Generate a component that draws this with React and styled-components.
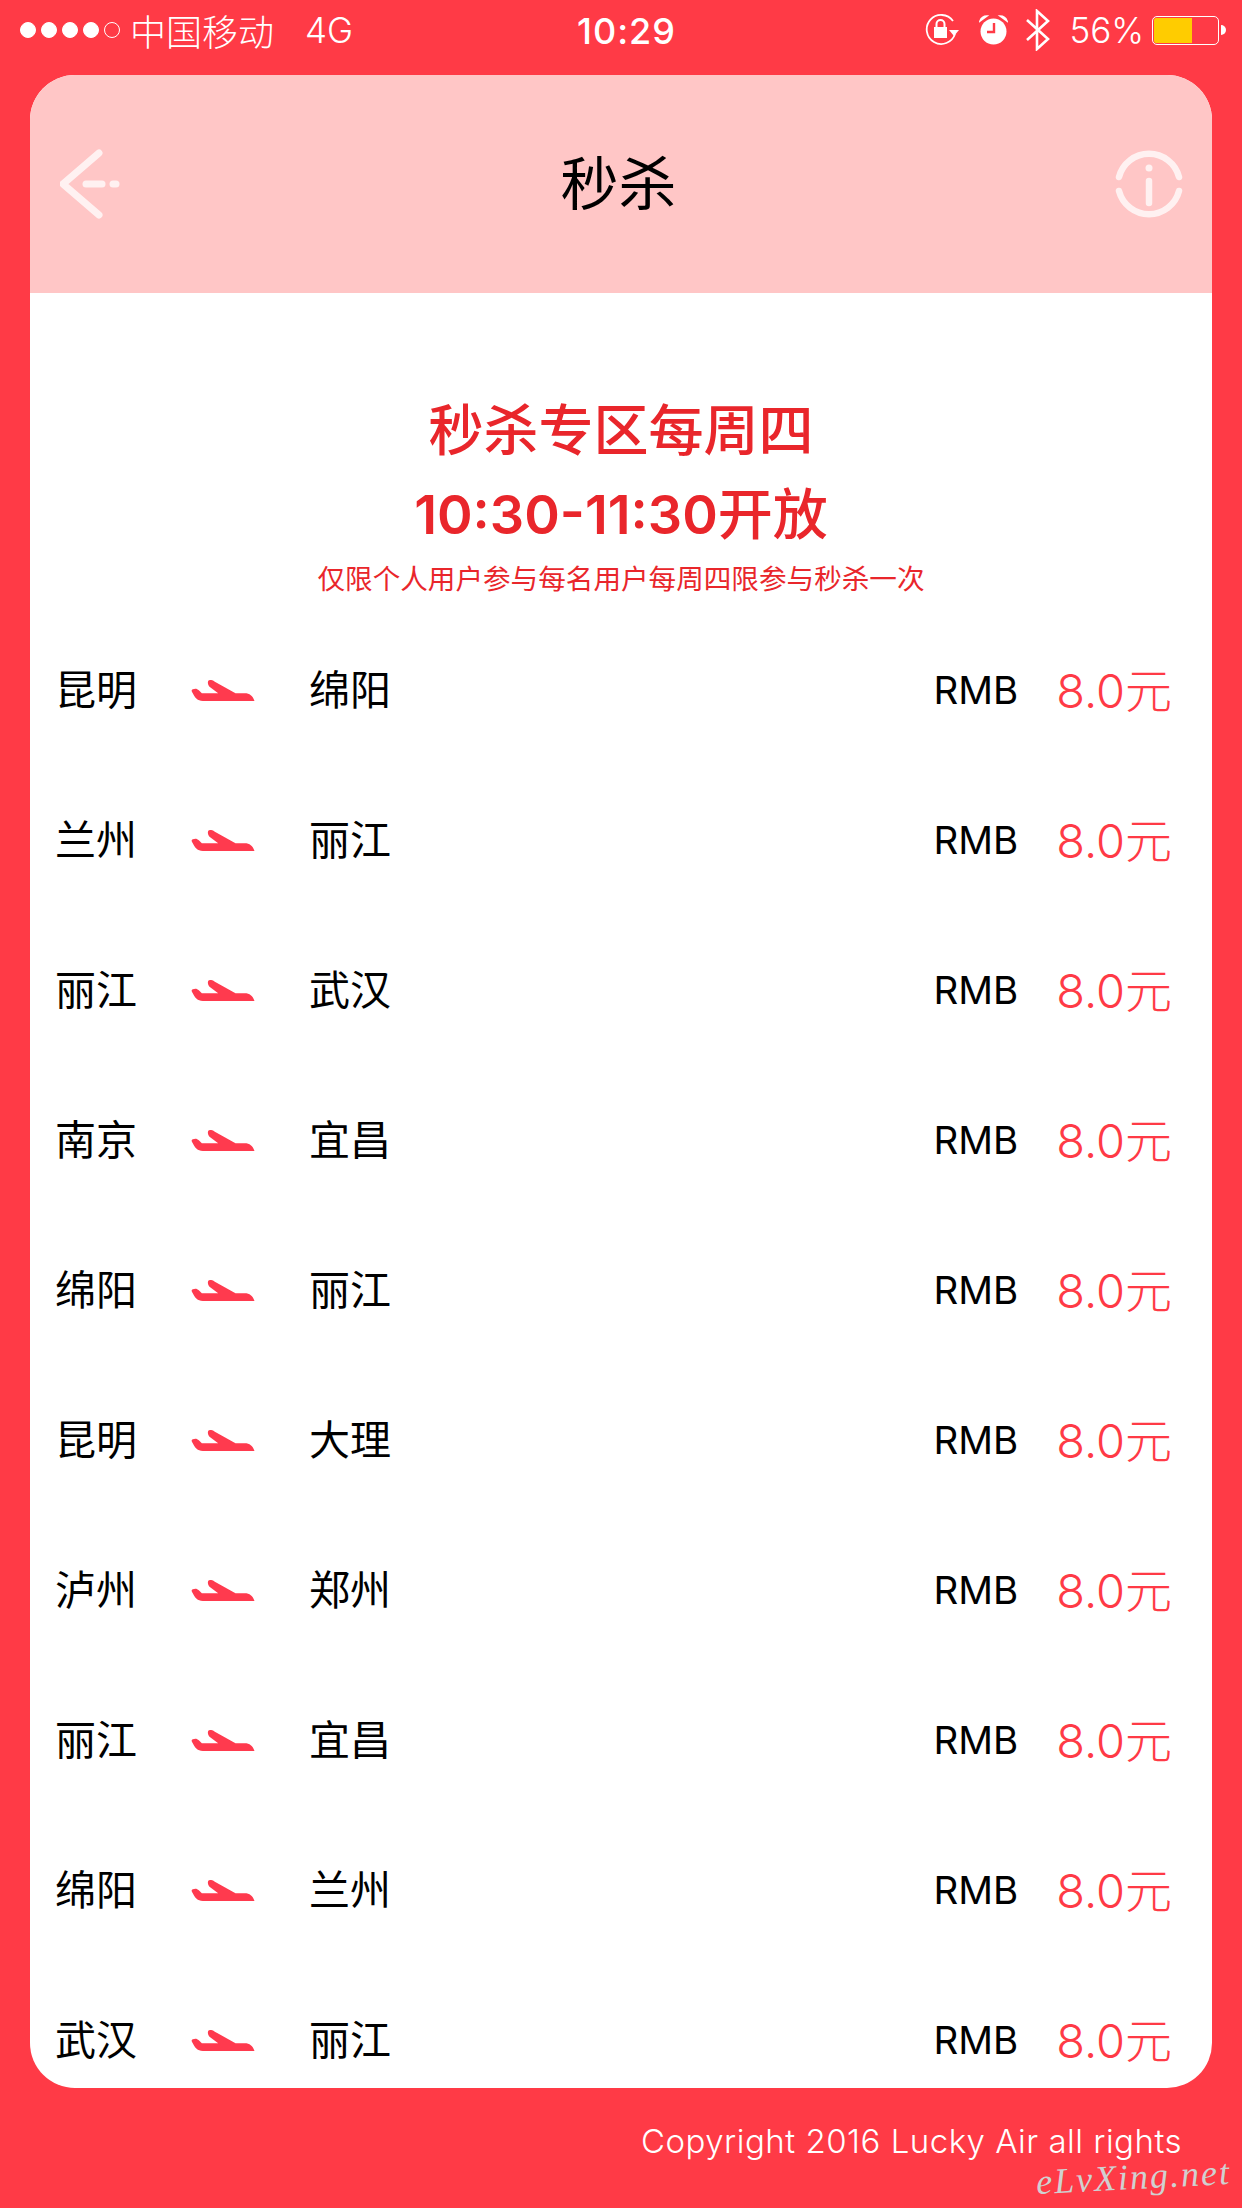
import styled, { createGlobalStyle } from 'styled-components';

const GlobalStyle = createGlobalStyle`
  html, body {
    margin: 0;
    padding: 0;
    background: #ff3a46;
  }
`;

const Page = styled.div`
  position: relative;
  width: 1242px;
  height: 2208px;
  overflow: hidden;
  background: #ff3a46;
  font-family: Inter, "Noto Sans CJK SC", sans-serif;
  color: #000;
`;

const StatusBar = styled.div`
  height: 75px;
  padding: 0 17px 15px 20px;
  display: flex;
  align-items: center;
  color: #fff;
  box-sizing: border-box;
`;

const StatusLeft = styled.div`
  flex: 1;
  display: flex;
  align-items: center;
  font-size: 35px;
  font-weight: 300;
`;

const StatusRight = styled.div`
  flex: 1;
  display: flex;
  align-items: center;
  justify-content: flex-end;
  font-size: 35px;
  font-weight: 300;
`;

const Dot = styled.span`
  width: 16px;
  height: 16px;
  margin-right: 5px;
  border-radius: 50%;
  box-sizing: border-box;
  border: 1px solid #fff;
  background: ${(p) => (p.$empty ? 'transparent' : '#fff')};
`;

const Carrier = styled.span`
  margin-left: 5px;
  font-size: 36px;
`;

const Network = styled.span`
  margin-left: 31px;
  font-size: 35px;
`;

const Time = styled.span`
  margin: 2px 0 0 8px;
  font-size: 36px;
  font-weight: 500;
  letter-spacing: 1px;
`;

const StatusIcon = styled.svg`
  display: block;
  margin-right: ${(p) => p.$gap || 0}px;
`;

const Percent = styled.span`
  margin-right: 8px;
`;

const Battery = styled.div`
  position: relative;
  width: 67px;
  height: 29px;
  box-sizing: border-box;
  border: 1.5px solid #fff;
  border-radius: 5px;
  padding: 1px;
  margin-right: 6px;

  &::after {
    content: '';
    position: absolute;
    right: -8px;
    top: 8px;
    width: 5px;
    height: 10px;
    background: #fff;
    border-radius: 0 5px 5px 0;
  }
`;

const BatteryLevel = styled.div`
  height: 100%;
  background: #ffcc00;
  border-radius: 2px 0 0 2px;
`;

const Card = styled.div`
  margin: 0 30px;
  height: 2013px;
  background: #fff;
  border-radius: 45px;
  overflow: hidden;
`;

const Header = styled.div`
  height: 218px;
  padding: 0 29px 0 30px;
  background: #ffc6c6;
  display: flex;
  align-items: center;
  justify-content: space-between;
`;

const HeaderTitle = styled.div`
  font-size: 58px;
  line-height: 1;
`;

const Intro = styled.div`
  padding: 95px 0 13px;
  text-align: center;
  color: #e9262b;
`;

const IntroLine = styled.div`
  height: 84px;
  font-size: 55px;
  font-weight: 500;
  line-height: 84px;
`;

const IntroTime = styled.span`
  font-size: 54px;
  font-weight: 600;
`;

const IntroNote = styled.div`
  font-size: 27.6px;
  line-height: 46px;
`;

const Row = styled.div`
  height: 150px;
  padding: 0 40px 0 25px;
  display: flex;
  align-items: center;
`;

const City = styled.span`
  font-size: 41px;
  margin-bottom: 6px;
  width: ${(p) => p.$width}px;
`;

const Plane = styled.svg`
  display: block;
  margin-left: 1px;
  margin-right: 54px;
`;

const Currency = styled.span`
  margin-left: auto;
  margin-right: 38px;
  font-size: 38.5px;
`;

const Price = styled.span`
  font-size: 47px;
  font-weight: 300;
  margin-bottom: 6px;
  color: #ff3a46;
`;

const Footer = styled.div`
  height: 120px;
  padding: 31px 60px 0 0;
  box-sizing: border-box;
  text-align: right;
  color: #fff;
  font-size: 33px;
  font-weight: 300;
  line-height: 44px;
  letter-spacing: 0.5px;
`;

const Watermark = styled.div`
  position: absolute;
  right: 11px;
  bottom: 13px;
  font-family: "Liberation Serif", serif;
  font-style: italic;
  font-size: 36px;
  letter-spacing: 2px;
  line-height: 1;
  color: #d0d0d0;
  transform: rotate(-3deg);
`;

const routes = [
  ['昆明', '绵阳'],
  ['兰州', '丽江'],
  ['丽江', '武汉'],
  ['南京', '宜昌'],
  ['绵阳', '丽江'],
  ['昆明', '大理'],
  ['泸州', '郑州'],
  ['丽江', '宜昌'],
  ['绵阳', '兰州'],
  ['武汉', '丽江'],
];

const PlaneIcon = () => (
  <Plane width="64" height="21" viewBox="0 0 189 63">
    <path
      fill="#ff3a4e"
      d="M52 1c6-3 12 0 18 4l62 35h28c14 0 24 8 29 23H34C18 63 10 52 5 42 2 36-3 31 4 28c7-3 13-2 18 3l9 9h49L56 22c-6-5-10-16-4-21z"
    />
  </Plane>
);

const BackIcon = () => (
  <svg width="62" height="70" viewBox="0 0 62 70" fill="none" stroke="#fff" strokeOpacity=".75" strokeWidth="7" strokeLinecap="round" strokeLinejoin="round">
    <path d="M39 4 3 35l36 31" />
    <path d="M26 35h16" />
    <path d="M53 35h3" />
  </svg>
);

const InfoIcon = () => (
  <svg width="68" height="70" viewBox="0 0 68 70" fill="none" stroke="#fff" strokeOpacity=".75" strokeWidth="6.5" strokeLinecap="round">
    <path d="M4 28A31 31 0 0 1 64 28" />
    <path d="M4 42A31 31 0 0 0 64 42" />
    <path d="M34 32v22" />
    <circle cx="34" cy="19" r="3.5" fill="#fff" fillOpacity=".75" stroke="none" />
  </svg>
);

const App = () => (
  <Page>
    <GlobalStyle />
    <StatusBar>
      <StatusLeft>
        <Dot />
        <Dot />
        <Dot />
        <Dot />
        <Dot $empty />
        <Carrier>中国移动</Carrier>
        <Network>4G</Network>
      </StatusLeft>
      <Time>10:29</Time>
      <StatusRight>
        <StatusIcon $gap={20} width="35" height="32" viewBox="0 0 35 32" fill="none" stroke="#fff" strokeWidth="1.8">
          <path d="M31 20A14.5 14.5 0 1 1 29 7" />
          <path d="M25 16h10l-5 6z" fill="#fff" stroke="none" />
          <path d="M10 13h13v11H10z" fill="#fff" stroke="none" />
          <path d="M12.5 13V10a4 4 0 0 1 8 0v3" strokeWidth="2" />
        </StatusIcon>
        <StatusIcon $gap={18} width="29" height="30" viewBox="0 0 29 30">
          <circle cx="14.5" cy="16.5" r="13" fill="#fff" />
          <path d="M15 8v9H8" fill="none" stroke="#ff3a46" strokeWidth="2.4" />
          <path d="M1 6c1-3 4-5 7-5zM28 6c-1-3-4-5-7-5z" fill="#fff" stroke="#fff" strokeWidth="1.5" />
        </StatusIcon>
        <StatusIcon $gap={19} width="24" height="42" viewBox="0 0 24 42" fill="none" stroke="#fff" strokeWidth="2.6">
          <path d="M1 11l21 19-11 10V2l11 10L1 31" />
        </StatusIcon>
        <Percent>56%</Percent>
        <Battery>
          <BatteryLevel style={{ width: '60%' }} />
        </Battery>
      </StatusRight>
    </StatusBar>
    <Card>
      <Header>
        <BackIcon />
        <HeaderTitle>秒杀</HeaderTitle>
        <InfoIcon />
      </Header>
      <Intro>
        <IntroLine>秒杀专区每周四</IntroLine>
        <IntroLine><IntroTime>10:30-11:30</IntroTime>开放</IntroLine>
        <IntroNote>仅限个人用户参与每名用户每周四限参与秒杀一次</IntroNote>
      </Intro>
      {routes.map(([from, to], index) => (
        <Row key={index}>
          <City $width={135}>{from}</City>
          <PlaneIcon />
          <City>{to}</City>
          <Currency>RMB</Currency>
          <Price>8.0元</Price>
        </Row>
      ))}
    </Card>
    <Footer>Copyright 2016 Lucky Air all rights</Footer>
    <Watermark>eLvXing.net</Watermark>
  </Page>
);

export default App;
